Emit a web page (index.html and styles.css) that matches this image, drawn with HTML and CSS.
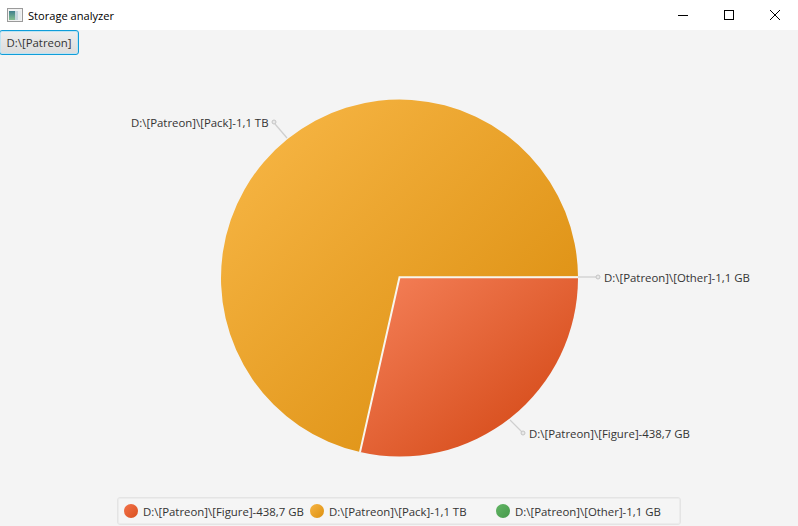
FILE: index.html
```html
<!DOCTYPE html>
<html lang="en">
<head>
<meta charset="utf-8">
<title>Storage analyzer</title>
<link rel="stylesheet" href="styles.css">
</head>
<body>
<div class="window">
  <header class="titlebar">
    <svg class="app-icon" width="16" height="14" viewBox="0 0 16 14">
      <defs>
        <linearGradient id="g-icon" x1="0" y1="0" x2="0" y2="1">
          <stop offset="0" stop-color="#3f7f8c"/>
          <stop offset="1" stop-color="#86bf8f"/>
        </linearGradient>
      </defs>
      <rect x="0.500" y="0.500" width="15" height="13" fill="#f2f2f2" stroke="#9a9a9a"/>
      <rect x="2" y="3" width="6" height="9" fill="url(#g-icon)"/>
      <rect x="8" y="3" width="3" height="9" fill="#c4d4dc"/>
      <rect x="11" y="3" width="3" height="9" fill="#e8ecee"/>
    </svg>
    <span class="title">Storage analyzer</span>
    <div class="controls">
      <div class="ctl">
        <svg width="12" height="12" viewBox="0 0 12 12"><path d="M1 6.500H11" stroke="#000" fill="none"/></svg>
      </div>
      <div class="ctl">
        <svg width="12" height="12" viewBox="0 0 12 12"><rect x="1.500" y="1.500" width="9" height="9" stroke="#000" fill="none"/></svg>
      </div>
      <div class="ctl">
        <svg width="12" height="12" viewBox="0 0 12 12"><path d="M1 1L11 11M11 1L1 11" stroke="#000" fill="none"/></svg>
      </div>
    </div>
  </header>
  <main class="content">
    <div class="toolbar"><button class="path-btn">D:\[Patreon]</button></div>
    <div class="plot">
      <svg class="chart" width="798" height="442" viewBox="0 55 798 442">
        <defs>
          <linearGradient id="g-figure" x1="0" y1="0" x2="1" y2="1">
            <stop offset="0" stop-color="#f5815a"/>
            <stop offset="0.850" stop-color="#d64c1a"/>
          </linearGradient>
          <linearGradient id="g-pack" x1="0" y1="0" x2="1" y2="1">
            <stop offset="0" stop-color="#f9b949"/>
            <stop offset="0.900" stop-color="#db8d0e"/>
          </linearGradient>
        </defs>
        <path fill="url(#g-pack)" d="M399.500 278L360 452.100A178.500 178.500 0 1 1 578 276.500Z"/>
        <path fill="url(#g-figure)" d="M399.500 278L578 278A178.500 178.500 0 0 1 360 452.100Z"/>
        <path class="divider" d="M578 277.300H399.500L360 452.100"/>
        <path class="leader" d="M287 138L275 124"/>
        <circle class="dot" cx="274" cy="122" r="2"/>
        <path class="leader" d="M578 277H596"/>
        <circle class="dot" cx="598" cy="277" r="2"/>
        <path class="leader" d="M510 420L522 432"/>
        <circle class="dot" cx="523" cy="433" r="2"/>
        <text class="label" x="131" y="127">D:\[Patreon]\[Pack]-1,1 TB</text>
        <text class="label" x="604" y="282">D:\[Patreon]\[Other]-1,1 GB</text>
        <text class="label" x="529" y="438">D:\[Patreon]\[Figure]-438,7 GB</text>
      </svg>
    </div>
    <div class="legend-row">
      <div class="legend">
        <div class="item"><span class="sym sym-figure"></span><span>D:\[Patreon]\[Figure]-438,7 GB</span></div>
        <div class="item"><span class="sym sym-pack"></span><span>D:\[Patreon]\[Pack]-1,1 TB</span></div>
        <div class="item"><span class="sym sym-other"></span><span>D:\[Patreon]\[Other]-1,1 GB</span></div>
      </div>
    </div>
  </main>
</div>
</body>
</html>
```
FILE: styles.css
```css
* { box-sizing: border-box; }
html, body { margin: 0; padding: 0; }
body {
  width: 798px;
  height: 526px;
  overflow: hidden;
  font-family: "Open Sans", "Noto Sans", sans-serif;
  font-size: 11.4px;
  color: #333;
}
.window { display: flex; flex-direction: column; height: 526px; }
.titlebar {
  height: 30px;
  flex: none;
  background: #fff;
  display: flex;
  align-items: center;
  padding-left: 7px;
}
.app-icon { flex: none; }
.title { margin-left: 5px; color: #000; font-size: 11.1px; }
.controls { margin-left: auto; display: flex; }
.ctl {
  width: 46px;
  height: 30px;
  display: flex;
  align-items: center;
  justify-content: center;
}
.content {
  flex: 1;
  display: flex;
  flex-direction: column;
  background: #f4f4f4;
  min-height: 0;
}
.toolbar { height: 25px; flex: none; display: flex; }
.path-btn {
  height: 25px;
  width: 80px;
  margin: 0 0 0 -1px;
  padding: 0;
  font: inherit;
  color: #333;
  border: 1px solid #0f9dd9;
  border-radius: 3px;
  box-shadow: inset 0 0 0 1px #bfe3f2;
  background: linear-gradient(#eeeeee, #dcdcdc);
}
.plot { flex: 1; min-height: 0; }
.chart { display: block; }
.divider { stroke: #f8f6ee; stroke-width: 2; fill: none; stroke-linejoin: miter; }
.leader { stroke: #cfcfcf; stroke-width: 1.300; fill: none; }
.dot { fill: #e8e8e8; stroke: #c4c4c4; stroke-width: 1; }
.label { font-size: 11.4px; fill: #333; }
.legend-row {
  flex: none;
  display: flex;
  justify-content: center;
  padding-bottom: 1px;
}
.legend {
  width: 564px;
  height: 28px;
  display: grid;
  grid-template-columns: 186px 186px 186px;
  align-items: center;
  padding-left: 6px;
  border: 1px solid #e4e4e4;
  border-radius: 3px;
  background: #f5f5f5;
  box-shadow: 0 0 0 1px #ececec inset;
}
.item { display: flex; align-items: center; gap: 5px; white-space: nowrap; }
.sym { width: 14px; height: 14px; border-radius: 50%; flex: none; }
.sym-figure { background: linear-gradient(135deg, #f3734a, #d9501f); }
.sym-pack { background: linear-gradient(135deg, #f6b444, #dd9010); }
.sym-other { background: linear-gradient(135deg, #62b565, #47994b); }
```
